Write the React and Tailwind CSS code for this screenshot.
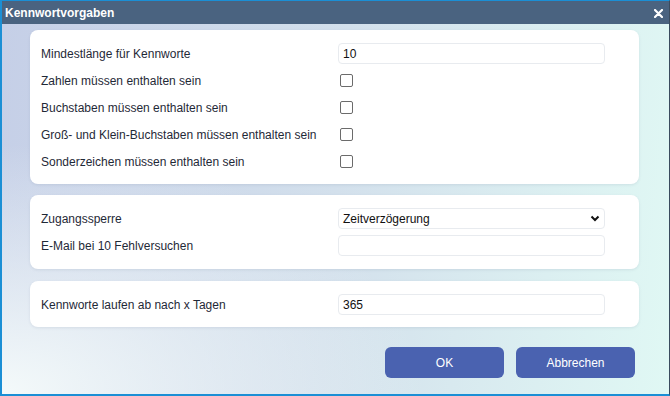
import React from "react";

const font = { fontFamily: '"Liberation Sans", Arial, sans-serif' };

const Row = ({ label, children }) => (
  <div className="flex h-[27px] items-center">
    <div className="w-[297px] text-[12px] text-[#1f2937]">{label}</div>
    <div className="flex items-center">{children}</div>
  </div>
);

const TextBox = ({ value }) => (
  <div className="flex h-[21px] w-[267px] items-center rounded-[4px] border border-[#e8ebef] bg-white pl-[4px] text-[12px] text-[#111]">
    {value}
  </div>
);

const Check = () => (
  <div className="ml-[2px] h-[13px] w-[13px] rounded-[2px] border border-[#6b6b6b] bg-white" />
);

const Card = ({ className = "", children }) => (
  <div className={"rounded-[8px] bg-white pl-[11px] shadow-[0_1px_3px_rgba(80,100,130,0.12)] " + className}>
    {children}
  </div>
);

const App = () => {
  return (
    <div
      style={font}
      className="flex h-[396px] w-[670px] flex-col border-t border-r border-l-2 border-b-2 border-t-[#1b8fd5] border-r-[#3a4b5e] border-l-[#1b8fd5] border-b-[#1b8fd5] bg-[radial-gradient(ellipse_at_0%_100%,#f4fafa_0%,rgba(244,250,250,0)_45%),linear-gradient(95deg,#c5cfe7_0%,#d3e0ec_50%,#e0f8f4_100%)]"
    >
      <div className="flex h-[23px] items-center justify-between bg-[#4a6380] pl-[3px] pr-[6px] text-white">
        <span className="text-[12px] font-bold">Kennwortvorgaben</span>
        <svg width="9" height="9" viewBox="0 0 9 9" className="mt-[1px]">
          <path d="M1 1 L8 8 M8 1 L1 8" stroke="white" strokeWidth="2.2" strokeLinecap="round" />
        </svg>
      </div>

      <div className="flex flex-col pl-[28px] pr-[30px] pt-[6px]">
        <Card className="pt-[10px] pb-[9px]">
          <Row label="Mindestlänge für Kennworte">
            <TextBox value="10" />
          </Row>
          <Row label="Zahlen müssen enthalten sein">
            <Check />
          </Row>
          <Row label="Buchstaben müssen enthalten sein">
            <Check />
          </Row>
          <Row label="Groß- und Klein-Buchstaben müssen enthalten sein">
            <Check />
          </Row>
          <Row label="Sonderzeichen müssen enthalten sein">
            <Check />
          </Row>
        </Card>

        <Card className="mt-[11px] pt-[10px] pb-[10px]">
          <Row label="Zugangssperre">
            <div className="flex h-[21px] w-[267px] items-center justify-between rounded-[4px] border border-[#e8ebef] bg-white pl-[4px] pr-[4px] text-[12px] text-[#111]">
              <span>Zeitverzögerung</span>
              <svg width="10" height="7" viewBox="0 0 10 7">
                <path d="M1.5 1.5 L5 5 L8.5 1.5" fill="none" stroke="#111" strokeWidth="2" />
              </svg>
            </div>
          </Row>
          <Row label="E-Mail bei 10 Fehlversuchen">
            <TextBox value="" />
          </Row>
        </Card>

        <Card className="mt-[12px] pt-[10px] pb-[9px]">
          <Row label="Kennworte laufen ab nach x Tagen">
            <TextBox value="365" />
          </Row>
        </Card>

        <div className="mt-[20px] flex justify-end gap-[12px] pr-[4px]">
          <button className="h-[31px] w-[119px] rounded-[6px] bg-[#4a62b0] text-[12px] text-white">
            OK
          </button>
          <button className="h-[31px] w-[119px] rounded-[6px] bg-[#4a62b0] text-[12px] text-white">
            Abbrechen
          </button>
        </div>
      </div>
    </div>
  );
};

export default App;
